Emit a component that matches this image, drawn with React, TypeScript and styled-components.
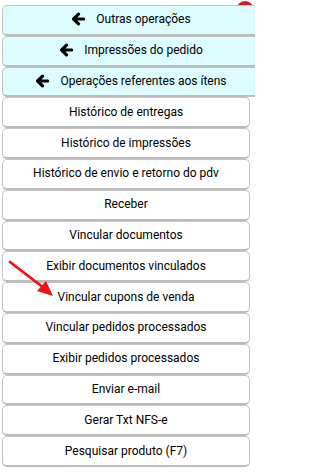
import React from 'react';
import styled, { createGlobalStyle } from 'styled-components';

const GlobalStyle = createGlobalStyle`
  html, body {
    margin: 0;
    padding: 0;
    background: #ffffff;
    overflow: hidden;
  }
  body {
    font-family: Roboto, 'Liberation Sans', Arial, sans-serif;
  }
`;

const Page = styled.div`
  position: relative;
  width: 255px;
  height: 472px;
  overflow: hidden;
`;

const Badge = styled.div`
  position: absolute;
  top: 1px;
  left: 236px;
  width: 18px;
  height: 12px;
  border-radius: 9px 9px 0 0;
  background: #c8202a;
  z-index: 0;
`;

const Menu = styled.div`
  position: relative;
  z-index: 1;
  display: flex;
  flex-direction: column;
  padding: 5px 0 0 2px;
`;

const Item = styled.button<{ $back?: boolean }>`
  box-sizing: border-box;
  display: flex;
  align-items: center;
  justify-content: center;
  gap: 11px;
  flex-shrink: 0;
  width: ${(p) => (p.$back ? '258px' : '248px')};
  height: 30.8px;
  margin: 0;
  padding: 0 0 1px;
  border: 1px solid #c4c4c4;
  border-bottom: 2px solid #bcbcbc;
  border-radius: 5px;
  background: ${(p) => (p.$back ? '#dcfcfe' : '#ffffff')};
  color: #000;
  font-family: Roboto, 'Liberation Sans', Arial, sans-serif;
  font-size: 12px;
  line-height: 14px;
  cursor: pointer;
`;

const BackIcon = styled.svg`
  width: 14px;
  height: 14px;
  flex-shrink: 0;
`;

const Pointer = styled.svg`
  position: absolute;
  left: 0;
  top: 250px;
  z-index: 2;
  pointer-events: none;
`;

const backItems = ['Outras operações', 'Impressões do pedido', 'Operações referentes aos ítens'];

const items = [
  'Histórico de entregas',
  'Histórico de impressões',
  'Histórico de envio e retorno do pdv',
  'Receber',
  'Vincular documentos',
  'Exibir documentos vinculados',
  'Vincular cupons de venda',
  'Vincular pedidos processados',
  'Exibir pedidos processados',
  'Enviar e-mail',
  'Gerar Txt NFS-e',
  'Pesquisar produto (F7)',
];

const ArrowLeft = () => (
  <BackIcon viewBox="0 0 14 14">
    <path
      d="M12.5 7 H3 M7.5 2.2 L2.6 7 L7.5 11.8"
      fill="none"
      stroke="#000"
      strokeWidth="3.2"
      strokeLinecap="round"
      strokeLinejoin="round"
    />
  </BackIcon>
);

export default function App() {
  return (
    <Page>
      <GlobalStyle />
      <Badge />
      <Menu>
        {backItems.map((label) => (
          <Item key={label} $back>
            <ArrowLeft />
            <span>{label}</span>
          </Item>
        ))}
        {items.map((label) => (
          <Item key={label}>{label}</Item>
        ))}
      </Menu>
      <Pointer width="60" height="50" viewBox="0 0 60 50">
        <line x1="10" y1="12" x2="44" y2="38" stroke="#f01010" strokeWidth="2.8" strokeLinecap="round" />
        <polygon points="53,46 37,41 46,31" fill="#f01010" />
      </Pointer>
    </Page>
  );
}
